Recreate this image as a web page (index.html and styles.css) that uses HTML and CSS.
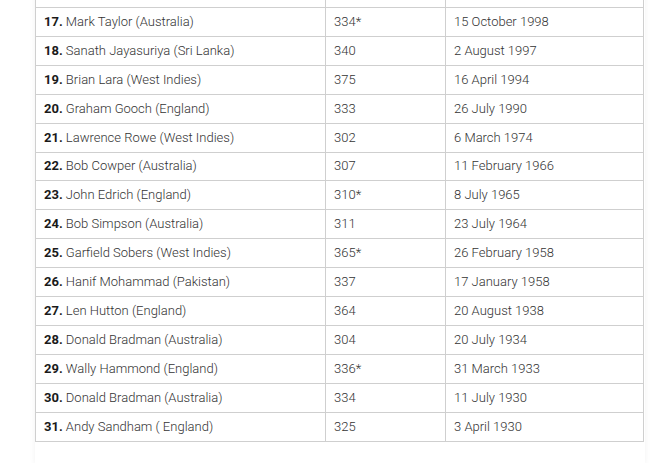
FILE: index.html
```html
<!DOCTYPE html>
<html>
<head>
<meta charset="utf-8">
<link rel="stylesheet" href="styles.css">
</head>
<body>
<div class="card">
  <table class="records">
    <colgroup><col class="c-name"><col class="c-score"><col class="c-date"></colgroup>
    <tbody>
      <tr><td></td><td></td><td></td></tr>
      <tr><td><b>17.</b> Mark Taylor (Australia)</td><td>334*</td><td>15 October 1998</td></tr>
      <tr><td><b>18.</b> Sanath Jayasuriya (Sri Lanka)</td><td>340</td><td>2 August 1997</td></tr>
      <tr><td><b>19.</b> Brian Lara (West Indies)</td><td>375</td><td>16 April 1994</td></tr>
      <tr><td><b>20.</b> Graham Gooch (England)</td><td>333</td><td>26 July 1990</td></tr>
      <tr><td><b>21.</b> Lawrence Rowe (West Indies)</td><td>302</td><td>6 March 1974</td></tr>
      <tr><td><b>22.</b> Bob Cowper (Australia)</td><td>307</td><td>11 February 1966</td></tr>
      <tr><td><b>23.</b> John Edrich (England)</td><td>310*</td><td>8 July 1965</td></tr>
      <tr><td><b>24.</b> Bob Simpson (Australia)</td><td>311</td><td>23 July 1964</td></tr>
      <tr><td><b>25.</b> Garfield Sobers (West Indies)</td><td>365*</td><td>26 February 1958</td></tr>
      <tr><td><b>26.</b> Hanif Mohammad (Pakistan)</td><td>337</td><td>17 January 1958</td></tr>
      <tr><td><b>27.</b> Len Hutton (England)</td><td>364</td><td>20 August 1938</td></tr>
      <tr><td><b>28.</b> Donald Bradman (Australia)</td><td>304</td><td>20 July 1934</td></tr>
      <tr><td><b>29.</b> Wally Hammond (England)</td><td>336*</td><td>31 March 1933</td></tr>
      <tr><td><b>30.</b> Donald Bradman (Australia)</td><td>334</td><td>11 July 1930</td></tr>
      <tr><td><b>31.</b> Andy Sandham ( England)</td><td>325</td><td>3 April 1930</td></tr>
    </tbody>
  </table>
</div>
</body>
</html>
```

FILE: styles.css
```css
html, body {
  margin: 0;
  padding: 0;
  background: #ffffff;
}
body {
  font-family: Roboto, "Liberation Sans", Arial, sans-serif;
  font-size: 13px;
  font-weight: 300;
  color: #333333;
  overflow: hidden;
}
.card {
  width: 610px;
  margin: -22px 0 0 35px;
  padding-bottom: 21px;
  background: #ffffff;
  box-shadow: 0 1px 6px rgba(0, 0, 0, 0.06);
}
.records {
  width: 608px;
  border-collapse: collapse;
  table-layout: fixed;
}
.c-name { width: 290px; }
.c-score { width: 120px; }
.c-date { width: 198px; }
.records td {
  border: 1px solid #cfcfcf;
  height: 28.93px;
  padding: 0 8px;
  box-sizing: border-box;
  line-height: 18px;
  vertical-align: middle;
  white-space: nowrap;
}
.records b {
  font-weight: 700;
  color: #1a1a1a;
}
```
